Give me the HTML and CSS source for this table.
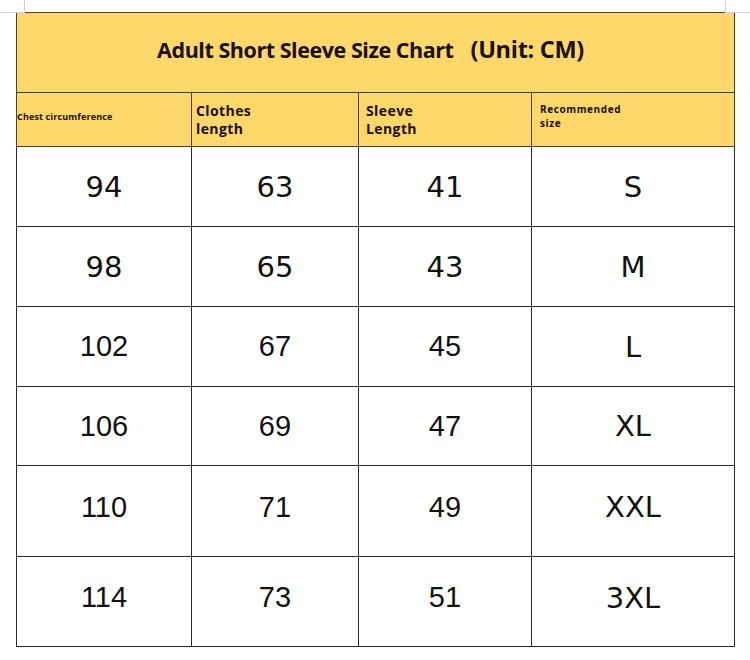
FILE: index.html
```html
<!DOCTYPE html>
<html>
<head>
<meta charset="utf-8">
<link rel="stylesheet" href="styles.css">
</head>
<body>
<div class="mark mark-l"></div>
<div class="mark mark-r"></div>
<div class="page">
  <table class="chart">
    <colgroup>
      <col class="c1"><col class="c2"><col class="c3"><col class="c4">
    </colgroup>
    <tr class="title-row">
      <td colspan="4"><div class="title"><span class="t-main">Adult Short Sleeve Size Chart</span><span class="t-unit">(Unit: CM)</span></div></td>
    </tr>
    <tr class="head-row">
      <td class="h-chest">Chest circumference</td>
      <td class="h-mid">Clothes<br>length</td>
      <td class="h-mid">Sleeve<br>Length</td>
      <td class="h-rec">Recommended<br>size</td>
    </tr>
    <tr class="r1 v"><td>94</td><td>63</td><td>41</td><td>S</td></tr>
    <tr class="r1 v"><td>98</td><td>65</td><td>43</td><td>M</td></tr>
    <tr class="r1"><td>102</td><td>67</td><td>45</td><td class="v">L</td></tr>
    <tr class="r1 r1b"><td>106</td><td>69</td><td>47</td><td class="v">XL</td></tr>
    <tr class="r2 r2a"><td>110</td><td>71</td><td>49</td><td class="v">XXL</td></tr>
    <tr class="r2"><td>114</td><td>73</td><td>51</td><td class="v">3XL</td></tr>
  </table>
</div>
</body>
</html>
```
FILE: styles.css
```css
html, body {
  margin: 0;
  padding: 0;
  background: #ffffff;
}
body {
  width: 750px;
  height: 660px;
  position: relative;
  overflow: hidden;
  font-family: "Liberation Sans", Arial, sans-serif;
  color: #111;
}
.mark {
  position: absolute;
  top: 0;
  width: 24px;
  height: 12px;
  border-color: #d2d2d2;
  border-style: solid;
  border-width: 0;
}
.mark-l { left: 0; border-right-width: 1px; border-bottom-width: 1px; }
.mark-r { left: 725px; border-left-width: 1px; border-bottom-width: 1px; }
.page {
  padding: 12px 0 0 16px;
}
.chart {
  border-collapse: collapse;
  table-layout: fixed;
  width: 718px;
}
.c1 { width: 175px; }
.c2 { width: 167px; }
.c3 { width: 173px; }
.c4 { width: 203px; }
.chart td {
  border: 1px solid #2a2a2a;
  padding: 0;
  text-align: center;
  vertical-align: middle;
}
.title-row td {
  height: 79px;
  background: #fed86b;
  border-color: #4a4222;
}
.title {
  display: flex;
  justify-content: center;
  align-items: baseline;
  gap: 17px;
  font-family: "Open Sans", "Noto Sans", sans-serif;
  font-weight: 700;
  color: #1a0e08;
  padding: 0 10px 8px 0;
}
.t-main {
  font-size: 21.5px;
  letter-spacing: -0.45px;
}
.t-unit {
  font-size: 23.5px;
  letter-spacing: -0.3px;
}
.head-row td {
  height: 53px;
  background: #fed86b;
  border-color: #4a4222;
  text-align: left;
  font-family: "Open Sans", "Noto Sans", sans-serif;
  font-weight: 700;
  color: #1a0e08;
}
.chart .h-chest {
  font-size: 9px;
  padding-left: 0;
  padding-bottom: 7px;
  height: 46px;
  letter-spacing: 0.15px;
}
.chart .h-mid {
  font-size: 14px;
  line-height: 18px;
  padding-left: 4px;
  letter-spacing: 0.4px;
}
.chart .h-mid + .h-mid { padding-left: 7px; }
.chart .h-rec {
  font-size: 10px;
  line-height: 14px;
  padding-left: 8px;
  padding-bottom: 8px;
  height: 45px;
  letter-spacing: 0.6px;
}
.r1 td { height: 79px; font-size: 29px; }
.r1b td { height: 78px; }
.r2 td { height: 81px; padding-bottom: 8px; font-size: 29px; }
.r2a td { height: 82px; }
.v, .v td { font-family: "DejaVu Sans", Verdana, sans-serif; }
```
